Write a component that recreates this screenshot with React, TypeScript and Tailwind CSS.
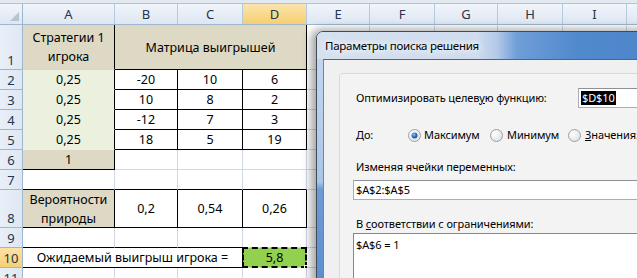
import React from 'react';

type CProps = {
  bg?: string;
  br?: string;
  bb?: string;
  extra?: string;
  children?: React.ReactNode;
};

function C({ bg = 'bg-white', br = 'border-r-[#d0d7e5]', bb = 'border-b-[#d0d7e5]', extra = '', children }: CProps) {
  return (
    <div className={`relative flex items-center justify-center text-center border-r border-b ${bg} ${br} ${bb} ${extra}`}>
      {children}
    </div>
  );
}

function RH({ n, active = false }: { n: number; active?: boolean }) {
  return (
    <div
      className={`flex items-end justify-center pb-[1px] border-r border-b border-r-[#9eb6ce] border-b-[#9eb6ce] text-[13px] leading-[16px] text-[#27344a] ${
        active ? 'bg-[linear-gradient(to_bottom,#fbe2a6,#f7cf74)]' : 'bg-[linear-gradient(to_right,#e9eff8,#dee7f3)]'
      }`}
    >
      {n}
    </div>
  );
}

function CH({ l, active = false }: { l: string; active?: boolean }) {
  return (
    <div
      className={`flex items-center justify-center border-r border-b border-r-[#b6c8dc] border-b-[#9eb6ce] text-[13px] text-[#27344a] ${
        active ? 'bg-[linear-gradient(to_bottom,#fbe4ad,#f6cf6f)]' : 'bg-[linear-gradient(to_bottom,#f1f5fb,#dde6f2)]'
      }`}
    >
      {l}
    </div>
  );
}

const black = 'border-r-black';
const blackB = 'border-b-black';
const tan = 'bg-[#ddd9c4]';
const green = 'bg-[#ebf1de]';

function Radio({ checked }: { checked?: boolean }) {
  return (
    <svg width="13" height="13" viewBox="0 0 13 13" className="shrink-0">
      <defs>
        <radialGradient id={checked ? 'rgc' : 'rgu'} cx="0.35" cy="0.35" r="0.8">
          <stop offset="0" stopColor="#ffffff" />
          <stop offset="1" stopColor="#d9dde2" />
        </radialGradient>
        <radialGradient id="dot" cx="0.4" cy="0.35" r="0.7">
          <stop offset="0" stopColor="#8fc3f0" />
          <stop offset="0.6" stopColor="#2c6bb0" />
          <stop offset="1" stopColor="#1d4f8c" />
        </radialGradient>
      </defs>
      <circle cx="6.5" cy="6.5" r="6" fill={`url(#${checked ? 'rgc' : 'rgu'})`} stroke="#9aa0a8" strokeWidth="1" />
      {checked && <circle cx="6.5" cy="6.5" r="3" fill="url(#dot)" />}
    </svg>
  );
}

export default function App() {
  const letters = ['A', 'B', 'C', 'D', 'E', 'F', 'G', 'H', 'I', 'J'];
  const blankRight = (key: string) => [
    <C key={key + 'E'} />,
    <C key={key + 'F'} />,
    <C key={key + 'G'} />,
    <C key={key + 'H'} />,
    <C key={key + 'I'} />,
    <C key={key + 'J'} />,
  ];

  return (
    <div className="relative w-[637px] h-[278px] overflow-hidden bg-white font-['Noto_Sans',sans-serif] text-black">
      <div className="h-[4px] bg-[#e3e9f1] border-b border-b-[#b1c3d8]" />
      <div className="grid grid-cols-[23px_92px_63px_65px_64px_63px_65px_63px_65px_64px_60px] grid-rows-[21px_45px_20px_20px_20px_20px_20px_20px_38px_20px_20px_20px] text-[12.5px] leading-[19px]">
        {/* header row */}
        <div className="relative border-r border-b border-r-[#9eb6ce] border-b-[#9eb6ce] bg-[linear-gradient(to_bottom,#f1f5fb,#dde6f2)]">
          <svg width="9" height="9" viewBox="0 0 9 9" className="absolute right-[3px] bottom-[3px]">
            <polygon points="9,0 9,9 0,9" fill="#b7c3d1" />
          </svg>
        </div>
        {letters.map((l) => (
          <CH key={l} l={l} active={l === 'D'} />
        ))}

        {/* row 1 */}
        <RH n={1} />
        <C bg={tan} br={black} bb="border-b-transparent">
          <span>
            Стратегии 1
            <br />
            игрока
          </span>
        </C>
        <C bg={tan} br={black} bb={blackB} extra="col-span-3">
          Матрица выигрышей
        </C>
        {blankRight('r1')}

        {/* rows 2-5 */}
        {[
          ['-20', '10', '6'],
          ['10', '8', '2'],
          ['-12', '7', '3'],
          ['18', '5', '19'],
        ].map((vals, i) => (
          <React.Fragment key={i}>
            <RH n={i + 2} />
            <C bg={green} br={black} bb="border-b-transparent">
              0,25
            </C>
            <C br={black} bb={blackB}>{vals[0]}</C>
            <C br={black} bb={blackB}>{vals[1]}</C>
            <C br={black} bb={blackB}>{vals[2]}</C>
            {blankRight('r' + (i + 2))}
          </React.Fragment>
        ))}

        {/* row 6 */}
        <RH n={6} />
        <C bg={tan} br={black} bb={blackB}>
          1
        </C>
        <C />
        <C />
        <C />
        {blankRight('r6')}

        {/* row 7 */}
        <RH n={7} />
        <C bb={blackB} />
        <C bb={blackB} />
        <C bb={blackB} />
        <C bb={blackB} />
        {blankRight('r7')}

        {/* row 8 */}
        <RH n={8} />
        <C bg={tan} br={black} bb={blackB}>
          <span>
            Вероятности
            <br />
            природы
          </span>
        </C>
        <C br={black} bb={blackB}>0,2</C>
        <C br={black} bb={blackB}>0,54</C>
        <C br={black} bb={blackB}>0,26</C>
        {blankRight('r8')}

        {/* row 9 */}
        <RH n={9} />
        <C bb={blackB} />
        <C bb={blackB} />
        <C bb={blackB} />
        <C />
        {blankRight('r9')}

        {/* row 10 */}
        <RH n={10} active />
        <C br={black} bb={blackB} extra="col-span-3">
          Ожидаемый выигрыш игрока =
        </C>
        <C bg="bg-[#92d050]">
          <div className="absolute inset-[-1px] border-2 border-dashed border-black" />
          <div className="absolute right-[-3px] bottom-[-3px] w-[5px] h-[5px] bg-black border border-white" />
          <span className="relative">5,8</span>
        </C>
        {blankRight('r10')}

        {/* row 11 */}
        <RH n={11} />
        <C />
        <C />
        <C />
        <C />
        {blankRight('r11')}
      </div>

      {/* Solver dialog */}
      <div className="absolute left-[316px] top-[31px] w-[340px] h-[260px] rounded-tl-[7px] border border-[#3f4a57] bg-[linear-gradient(to_bottom,#c9daf0_0px,#aac5e8_150px,#6d9bd6_157px,#5b8dcf_100%)] shadow-[-3px_0_9px_2px_rgba(0,0,0,0.35)]">
        <div className="h-[27px] rounded-tl-[6px] flex items-center pl-[8px] bg-[linear-gradient(to_right,#d6e1ef_0px,#cfdcee_160px,#b3c9e8_180px,#6f9ed8_200px,#5189cd_260px,#4f86cb_100%)]">
          <span className="text-[11.5px] tracking-[-0.25px] text-black [text-shadow:0_0_6px_#ffffff,0_0_10px_#ffffff]">
            Параметры поиска решения
          </span>
        </div>
        <div className="absolute left-[6px] top-[27px] right-0 bottom-0 border-l border-t border-l-[#6c86a8] border-t-[#4f6482] bg-[#f0f0f0]">
          <div className="absolute left-[15px] top-[13px] right-[-10px] bottom-[-10px] rounded-[3px] border border-[#dadada] bg-[#f3f3f3]">
            <div className="flex flex-col pl-[16px] text-[11px] tracking-[-0.1px] leading-[16px] text-black">
              <div className="flex items-center h-[20px] mt-[14px]">
                <span className="w-[222px] shrink-0">
                  Оптимизировать целев<span className="underline">у</span>ю функцию:
                </span>
                <div className="h-[20px] w-[80px] border border-[#abadb3] border-t-[#8e9197] bg-white flex items-center pl-[2px]">
                  <span className="bg-black text-white px-[1px] leading-[14px]">$D$10</span>
                </div>
              </div>
              <div className="flex items-center h-[20px] mt-[17px]">
                <span className="w-[52px] shrink-0">До:</span>
                <div className="flex items-center w-[82px] shrink-0 gap-[3px]">
                  <Radio checked />
                  <span>Максимум</span>
                </div>
                <div className="flex items-center w-[78px] shrink-0 gap-[4px]">
                  <Radio />
                  <span>Минимум</span>
                </div>
                <div className="flex items-center shrink-0 gap-[4px]">
                  <Radio />
                  <span>
                    <span className="underline">З</span>начения:
                  </span>
                </div>
              </div>
              <div className="flex items-center h-[20px] mt-[12px]">Изменяя ячейки переменных:</div>
              <div className="h-[20px] mt-[3px] -ml-[3px] border border-[#abadb3] border-t-[#8e9197] bg-white flex items-center pl-[2px]">
                $A$2:$A$5
              </div>
              <div className="flex items-center h-[18px] mt-[15px]">
                <span>
                  В <span className="underline">с</span>оответствии с ограничениями:
                </span>
              </div>
              <div className="h-[60px] -ml-[3px] border border-[#828790] bg-white pl-[2px] pt-[3px]">$A$6 = 1</div>
            </div>
          </div>
        </div>
      </div>
    </div>
  );
}
